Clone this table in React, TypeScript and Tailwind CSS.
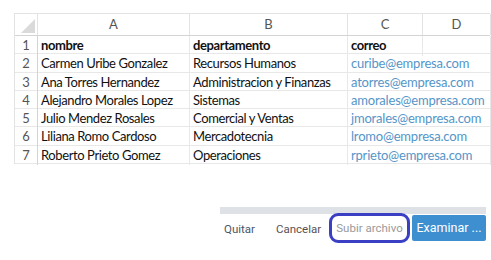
import React from "react";

const rows = [
  ["Carmen Uribe Gonzalez", "Recursos Humanos", "curibe@empresa.com"],
  ["Ana Torres Hernandez", "Administracion y Finanzas", "atorres@empresa.com"],
  ["Alejandro Morales Lopez", "Sistemas", "amorales@empresa.com"],
  ["Julio Mendez Rosales", "Comercial y Ventas", "jmorales@empresa.com"],
  ["Liliana Romo Cardoso", "Mercadotecnia", "lromo@empresa.com"],
  ["Roberto Prieto Gomez", "Operaciones", "rprieto@empresa.com"],
];

const cols = "grid grid-cols-[23px_152px_158px_75px_68px]";

export default function App() {
  return (
    <div className="w-[491px] h-[260px] bg-white overflow-hidden flex flex-col" style={{ fontFamily: "Lato, 'Open Sans', sans-serif" }}>
      <div className="ml-[14px] mt-[13px] w-[476px] border-l border-t border-[#e3e3e3] text-[13px] tracking-[-0.4px] text-[#111]">
        <div className={`${cols} h-[22px] border-b border-[#d4d4d4]`}>
          <div className="border-r border-[#e3e3e3] relative overflow-hidden">
            <svg className="absolute right-[2px] bottom-[2px]" width="14" height="14" viewBox="0 0 14 14">
              <polygon points="14,0 14,14 0,14" fill="#dadada" />
            </svg>
          </div>
          {["A", "B", "C", "D"].map((l) => (
            <div key={l} className="border-r border-[#e3e3e3] flex items-center justify-center text-[#555] text-[13px] tracking-normal">
              {l}
            </div>
          ))}
        </div>
        <div className={`${cols} h-[18.3px] border-b border-[#e8e8e8]`}>
          <div className="border-r border-[#d4d4d4] flex items-center justify-center text-[#555] tracking-normal">1</div>
          <div className="border-r border-[#e8e8e8] flex items-center pl-[3px] font-bold">nombre</div>
          <div className="border-r border-[#e8e8e8] flex items-center pl-[3px] font-bold">departamento</div>
          <div className="border-r border-[#e8e8e8] flex items-center pl-[3px] font-bold">correo</div>
          <div className="border-r border-[#e8e8e8]"></div>
        </div>
        {rows.map((r, i) => (
          <div key={i} className={`${cols} h-[18.3px] border-b border-[#e8e8e8]`}>
            <div className="border-r border-[#d4d4d4] flex items-center justify-center text-[#555] tracking-normal">{i + 2}</div>
            <div className="border-r border-[#e8e8e8] flex items-center pl-[3px] whitespace-nowrap">{r[0]}</div>
            <div className="border-r border-[#e8e8e8] flex items-center pl-[3px] whitespace-nowrap">{r[1]}</div>
            <div className="col-span-2 border-r border-[#e8e8e8] flex items-center pl-[3px] whitespace-nowrap text-[#5595c8] tracking-[-0.2px]">{r[2]}</div>
          </div>
        ))}
      </div>
      <div className="ml-[220px] mt-[43px] w-[266px] h-[7px] bg-[#dee2e6]" />
      <div className="flex items-center ml-[224px] mt-[-1px] text-[11.5px]" style={{ fontFamily: "Roboto, sans-serif" }}>
        <span className="w-[52px] pt-[3px] text-[#4a5568]">Quitar</span>
        <span className="w-[53px] pt-[3px] text-[#5a4f55]">Cancelar</span>
        <div className="w-[81px] h-[30px] border-[3px] border-[#3a3fc4] rounded-[9px] flex items-center justify-center pt-[2px] text-[#9a9a9a]">
          Subir archivo
        </div>
        <div className="ml-[2px] w-[74px] h-[26px] bg-[#3d8fd0] rounded-[2px] flex items-center justify-center text-white text-[12.5px]">
          Examinar ...
        </div>
      </div>
    </div>
  );
}
